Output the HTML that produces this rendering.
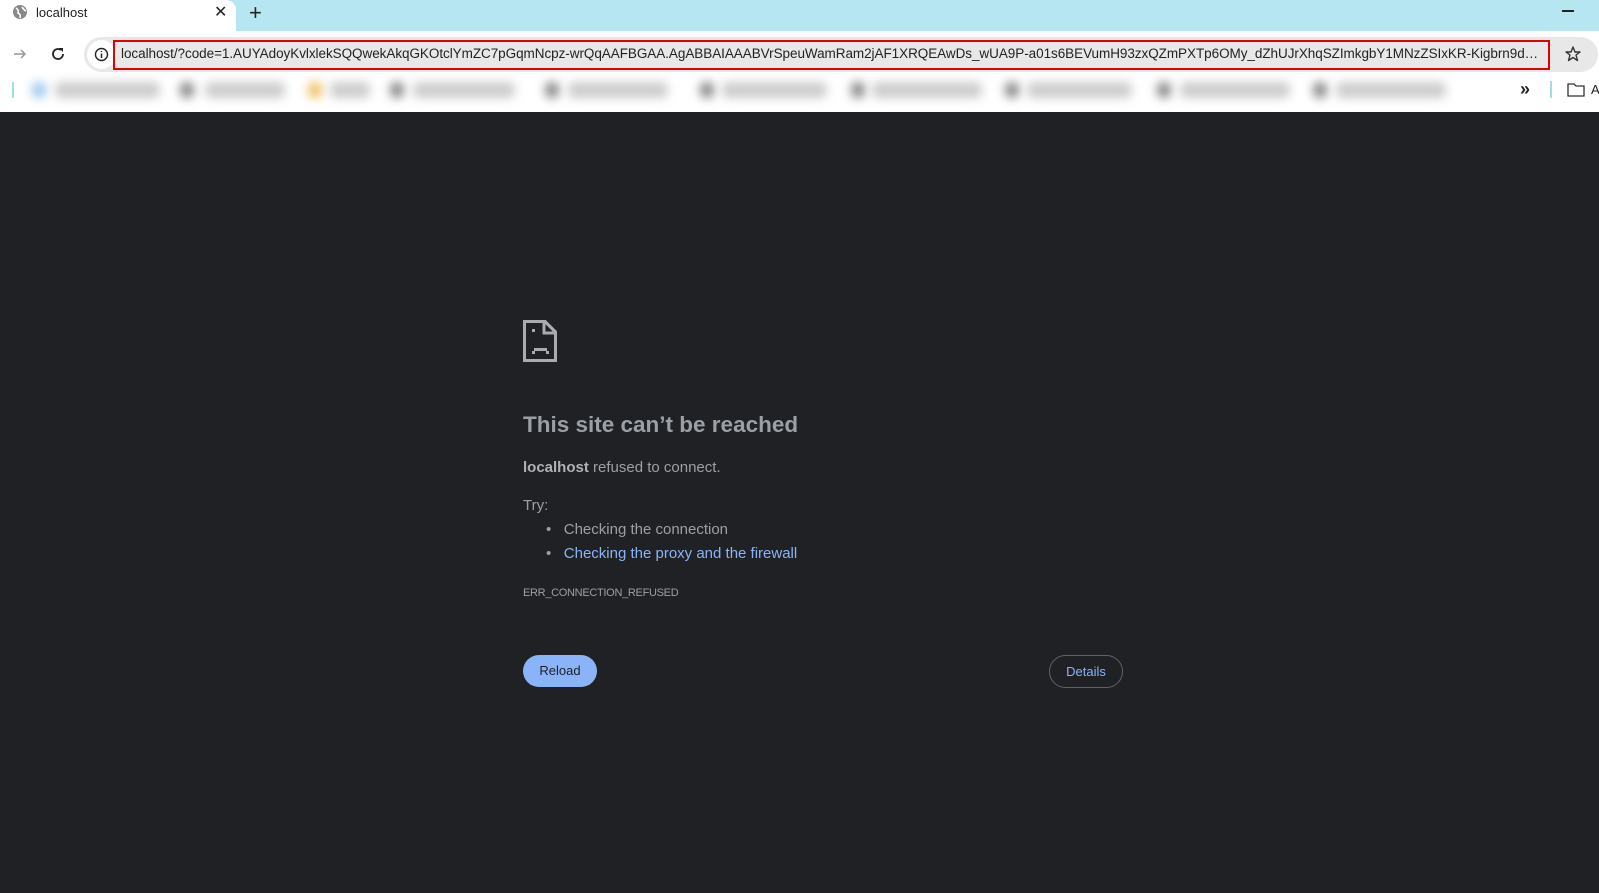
<!DOCTYPE html>
<html><head><meta charset="utf-8"><style>
*{margin:0;padding:0;box-sizing:border-box}
body{width:1599px;height:893px;overflow:hidden;background:#202124;font-family:"Liberation Sans",sans-serif;position:relative}
.abs{position:absolute}
#tabbar{left:0;top:0;width:1599px;height:31px;background:#b5e6f2}
#tab{left:0;top:0;width:236px;height:32px;background:#fff;border-radius:0 10px 0 0}
#toolbar{left:0;top:31px;width:1599px;height:81px;background:#fff}
#omni{left:84px;top:37px;width:1514px;height:35px;background:#e8e8e8;border-radius:18px}
#red{left:113px;top:40px;width:1437px;height:30px;border:2px solid #e50000}
.url{left:121px;top:46px;font-size:13.5px;color:#222;white-space:nowrap;width:1424px;overflow:hidden;text-overflow:ellipsis;letter-spacing:-0.05px}
.bm{top:82px;height:16px;filter:blur(5px);border-radius:6px}
.txt{color:#9aa0a6}
</style></head><body>
<div id="tabbar" class="abs"></div>
<div id="tab" class="abs"></div>
<svg class="abs" style="left:12px;top:4px" width="16" height="16" viewBox="0 0 16 16"><circle cx="8" cy="8" r="7" fill="#888"/><path d="M4 4 Q7 6 6 9 Q9 10 8 14 M10 3 Q12 6 14 7" stroke="#fff" stroke-width="1.6" fill="none"/></svg>
<div class="abs" style="left:36px;top:5px;font-size:13px;color:#222">localhost</div>
<div class="abs" style="left:214px;top:2px;font-size:16px;color:#222">✕</div>
<div class="abs" style="left:249px;top:0px;font-size:22px;color:#222">+</div>
<div class="abs" style="left:1562px;top:10px;width:12px;height:1.5px;background:#222"></div>
<div id="toolbar" class="abs"></div>
<svg class="abs" style="left:12px;top:46px" width="16" height="16" viewBox="0 0 16 16"><path d="M2 8H13M9 4L13 8L9 12" stroke="#999" stroke-width="1.5" fill="none"/></svg>
<svg class="abs" style="left:50px;top:46px" width="16" height="16" viewBox="0 0 16 16"><path d="M13 8A5 5 0 1 1 11 4" stroke="#222" stroke-width="1.8" fill="none"/><path d="M9 2H13V6Z" fill="#222"/></svg>
<div id="omni" class="abs"></div>
<div class="abs" style="left:87px;top:40px;width:29px;height:29px;border-radius:50%;background:#fff"></div>
<svg class="abs" style="left:94px;top:47px" width="15" height="15" viewBox="0 0 15 15"><circle cx="7.5" cy="7.5" r="6" stroke="#222" stroke-width="1.4" fill="none"/><path d="M7.5 6.5V11M7.5 4V5" stroke="#222" stroke-width="1.5"/></svg>
<div id="red" class="abs"></div>
<div class="abs url">localhost/?code=1.AUYAdoyKvlxlekSQQwekAkqGKOtclYmZC7pGqmNcpz-wrQqAAFBGAA.AgABBAIAAABVrSpeuWamRam2jAF1XRQEAwDs_wUA9P-a01s6BEVumH93zxQZmPXTp6OMy_dZhUJrXhqSZImkgbY1MNzZSIxKR-Kigbrn9d4B...</div>
<svg class="abs" style="left:1564px;top:45px" width="18" height="18" viewBox="0 0 18 18"><path d="M9 2L11 7H16L12 10L13.5 15.5L9 12.5L4.5 15.5L6 10L2 7H7Z" stroke="#333" stroke-width="1.4" fill="none" stroke-linejoin="round"/></svg>
<div class="abs" style="left:12px;top:82px;width:2px;height:16px;background:#9fdcee"></div>
<div class="abs bm" style="left:32px;width:14px;background:#9cc8ee"></div>
<div class="abs bm" style="left:55px;width:105px;background:#ccc"></div>
<div class="abs bm" style="left:180px;width:14px;background:#888"></div>
<div class="abs bm" style="left:205px;width:80px;background:#ccc"></div>
<div class="abs bm" style="left:308px;width:14px;background:#f0c060"></div>
<div class="abs bm" style="left:330px;width:40px;background:#ccc"></div>
<div class="abs bm" style="left:390px;width:14px;background:#888"></div>
<div class="abs bm" style="left:413px;width:102px;background:#ccc"></div>
<div class="abs bm" style="left:545px;width:14px;background:#888"></div>
<div class="abs bm" style="left:568px;width:100px;background:#ccc"></div>
<div class="abs bm" style="left:700px;width:14px;background:#888"></div>
<div class="abs bm" style="left:722px;width:105px;background:#ccc"></div>
<div class="abs bm" style="left:851px;width:14px;background:#888"></div>
<div class="abs bm" style="left:872px;width:110px;background:#ccc"></div>
<div class="abs bm" style="left:1005px;width:14px;background:#888"></div>
<div class="abs bm" style="left:1027px;width:105px;background:#ccc"></div>
<div class="abs bm" style="left:1157px;width:14px;background:#888"></div>
<div class="abs bm" style="left:1180px;width:110px;background:#ccc"></div>
<div class="abs bm" style="left:1313px;width:14px;background:#888"></div>
<div class="abs bm" style="left:1336px;width:110px;background:#ccc"></div>
<div class="abs" style="left:1520px;top:79px;font-size:18px;color:#222;font-weight:bold">»</div>
<div class="abs" style="left:1550px;top:81px;width:2px;height:17px;background:#9fdcee"></div>
<svg class="abs" style="left:1567px;top:83px" width="18" height="14" viewBox="0 0 18 14"><path d="M1 1H7L9 3H17V13H1Z" stroke="#333" stroke-width="1.3" fill="none"/></svg>
<div class="abs" style="left:1591px;top:82px;font-size:13px;color:#222">A</div>

<svg class="abs" style="left:523px;top:320px" width="34" height="42" viewBox="0 0 34 42" shape-rendering="crispEdges"><path d="M1.5 1.5H22L32.5 12V40.5H1.5Z" stroke="#a8acb0" stroke-width="3" fill="none"/><path d="M21 2V13H32" stroke="#a8acb0" stroke-width="3" fill="none"/><rect x="9" y="9" width="3" height="3" fill="#a8acb0"/><rect x="9" y="31" width="3" height="3" fill="#a8acb0"/><rect x="11" y="28" width="13" height="3" fill="#a8acb0"/><rect x="23" y="31" width="3" height="3" fill="#a8acb0"/></svg>
<div class="abs txt" style="left:523px;top:412px;font-size:22.5px;font-weight:bold;color:#9aa0a6">This site can’t be reached</div>
<div class="abs txt" style="left:523px;top:459px;font-size:15px"><b style="color:#aeb2b6">localhost</b> refused to connect.</div>
<div class="abs txt" style="left:523px;top:497px;font-size:15px">Try:</div>
<div class="abs txt" style="left:546px;top:521px;font-size:15px">•&nbsp;&nbsp;&nbsp;Checking the connection</div>
<div class="abs txt" style="left:546px;top:545px;font-size:15px">•&nbsp;&nbsp;&nbsp;<span style="color:#8ab4f8">Checking the proxy and the firewall</span></div>
<div class="abs txt" style="left:523px;top:587px;font-size:11px;letter-spacing:-0.3px">ERR_CONNECTION_REFUSED</div>
<div class="abs" style="left:523px;top:655px;width:74px;height:32px;border-radius:16px;background:#8ab4f8;color:#202124;font-size:13px;text-align:center;line-height:32px">Reload</div>
<div class="abs" style="left:1049px;top:655px;width:74px;height:33px;border-radius:17px;border:1px solid #5f6368;color:#8ab4f8;font-size:13px;text-align:center;line-height:31px">Details</div>
</body></html>
